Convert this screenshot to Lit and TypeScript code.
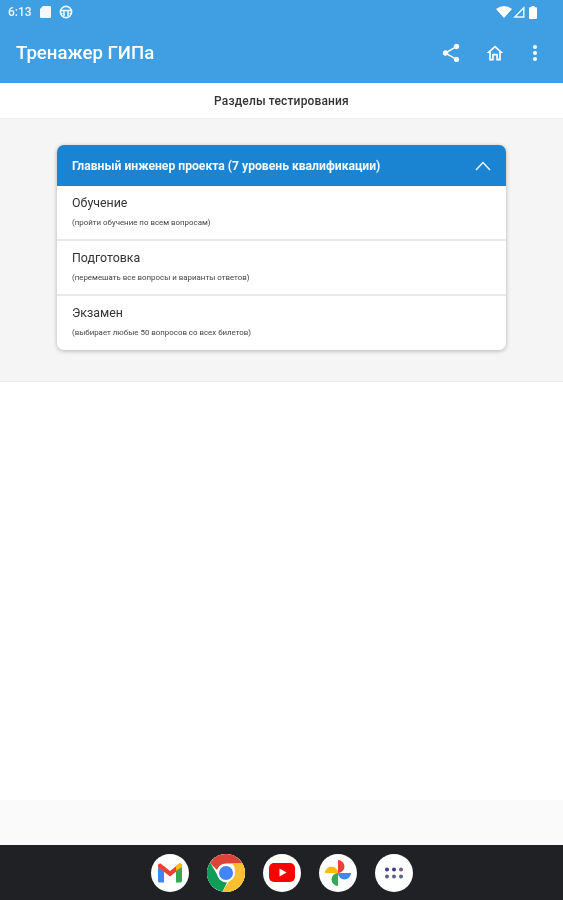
import { LitElement, html, css } from "lit";
import { customElement } from "lit/decorators.js";

@customElement("app-root")
export class AppRoot extends LitElement {
  static styles = css`
    :host { display: flex; flex-direction: column; width: 563px; height: 900px; overflow: hidden; background: #fff; font-family: Roboto, "Liberation Sans", sans-serif; filter: blur(0.4px); }
    .top { background: #3f9fe2; height: 83px; color: #fff; display: flex; flex-direction: column; flex: none; }
    .status { height: 24px; display: flex; align-items: center; padding: 0 26px 0 8px; font-size: 12px; font-weight: 500; color: #eef7fd; }
    .status .time { margin-right: 8px; }
    .status svg { display: block; }
    .status .globe { margin-left: 8px; }
    .status .signal { margin-left: 1px; }
    .status .battery { margin-left: 4px; }
    .spacer { flex: 1; }
    .appbar { flex: 1; display: flex; align-items: center; padding: 0 0 0 16px; }
    .title { font-size: 18.6px; font-weight: 500; flex: 1; padding-bottom: 1px; }
    .actions { display: flex; align-items: center; padding-right: 25px; padding-bottom: 1px; }
    .actions svg { display: block; }
    .actions .home { margin-left: 23px; }
    .actions .dots { margin-left: 27px; }
    .sub { height: 36px; flex: none; display: flex; align-items: center; justify-content: center; font-size: 12px; font-weight: 500; color: #333; box-sizing: border-box; border-bottom: 1px solid #efefef; padding-top: 1px; letter-spacing: 0.15px; }
    .section { height: 263px; flex: none; background: #f5f5f5; box-sizing: border-box; border-bottom: 1px solid #ececec; padding: 26px 57px 0; }
    .card { border-radius: 7px; box-shadow: 0 1px 4px rgba(0,0,0,.28); background: #e9e9e9; overflow: hidden; }
    .head { height: 41px; background: #1b84d2; color: #f2f8fd; display: flex; align-items: center; justify-content: space-between; padding: 0 15px 0 15px; font-size: 12.15px; font-weight: 700; }
    .row { background: #fff; height: 52.5px; margin-bottom: 2.5px; padding: 9px 15px 0; box-sizing: border-box; color: #333; }
    .row:last-child { margin-bottom: 0; height: 54px; }
    .row .name { font-size: 12.4px; line-height: 15px; }
    .row .desc { font-size: 7.9px; line-height: 9px; margin-top: 8px; color: #444; }
    .blank { flex: 1; }
    .foot { height: 45px; flex: none; background: #fafafa; }
    .dock { height: 55px; flex: none; background: #202124; display: flex; align-items: center; justify-content: center; gap: 18px; }
    .ic { width: 38px; height: 38px; border-radius: 50%; background: #fff; display: flex; align-items: center; justify-content: center; }
    .ic svg { display: block; }
  `;

  render() {
    return html`
      <div class="top">
        <div class="status">
          <span class="time">6:13</span>
          <svg width="11" height="14" viewBox="0 0 11 14"><path fill="#f2f9fe" d="M3 1h7a1 1 0 0 1 1 1v10a1 1 0 0 1-1 1H1a1 1 0 0 1-1-1V4z"/></svg>
          <svg class="globe" width="14" height="14" viewBox="0 0 14 14" fill="none" stroke="#f2f9fe" stroke-width="1.6"><circle cx="7" cy="7" r="5.6"/><path d="M1.500 5.500h11M1.500 8.500h2M10.500 8.500h2M5 6v5M9 6v5"/></svg>
          <span class="spacer"></span>
          <svg width="16" height="12" viewBox="0 0 16 12"><path fill="#fff" d="M0 3Q8-3 16 3L8 12z"/></svg>
          <svg class="signal" width="12" height="12" viewBox="0 0 12 12" fill="none" stroke="#f2f9fe" stroke-width="1.4"><path d="M10.800 1.800V11H1.800z"/></svg>
          <svg class="battery" width="8" height="13" viewBox="0 0 8 13"><path fill="#fff" d="M2.500 0h3v1.200H7a1 1 0 0 1 1 1V12a1 1 0 0 1-1 1H1a1 1 0 0 1-1-1V2.200a1 1 0 0 1 1-1h1.500z"/></svg>
        </div>
        <div class="appbar">
          <div class="title">Тренажер ГИПа</div>
          <div class="actions">
            <svg width="22" height="22" viewBox="0 0 24 24" fill="#fff"><path d="M18 16.080c-.76 0-1.440.3-1.960.77L8.910 12.700c.05-.23.090-.46.090-.7s-.04-.47-.09-.7l7.050-4.110c.54.5 1.250.81 2.040.81 1.660 0 3-1.340 3-3s-1.340-3-3-3-3 1.340-3 3c0 .24.040.47.090.7L8.040 9.810C7.500 9.310 6.790 9 6 9c-1.660 0-3 1.340-3 3s1.340 3 3 3c.79 0 1.500-.31 2.040-.81l7.120 4.160c-.05.21-.08.43-.08.65 0 1.610 1.310 2.920 2.920 2.920s2.920-1.310 2.920-2.920-1.310-2.920-2.920-2.920z"/></svg>
            <svg class="home" width="20" height="20" viewBox="0 0 24 24" fill="#fff"><path d="M12 3 2 12h3v9h5.500v-6h3v6H19v-9h3zm5 16h-1.500v-6h-7v6H7v-8.800l5-4.500 5 4.500z"/></svg>
            <svg class="dots" width="6" height="18" viewBox="0 0 6 18" fill="#fff"><circle cx="3" cy="3" r="2"/><circle cx="3" cy="9" r="2"/><circle cx="3" cy="15" r="2"/></svg>
          </div>
        </div>
      </div>
      <div class="sub">Разделы тестирования</div>
      <div class="section">
        <div class="card">
          <div class="head">
            <span>Главный инженер проекта (7 уровень квалификации)</span>
            <svg width="16" height="10" viewBox="0 0 16 10" fill="none" stroke="#e8f3fb" stroke-width="1.5"><path d="M1 9l7-7.500L15 9"/></svg>
          </div>
          <div class="row"><div class="name">Обучение</div><div class="desc">(пройти обучение по всем вопросам)</div></div>
          <div class="row"><div class="name">Подготовка</div><div class="desc">(перемешать все вопросы и варианты ответов)</div></div>
          <div class="row"><div class="name">Экзамен</div><div class="desc">(выбирает любые 50 вопросов со всех билетов)</div></div>
        </div>
      </div>
      <div class="blank"></div>
      <div class="foot"></div>
      <div class="dock">
        <div class="ic">
          <svg width="26" height="20" viewBox="0 0 26 20"><path fill="#4285f4" d="M1 4v14a1.500 1.500 0 0 0 1.500 1.500H7V8z"/><path fill="#34a853" d="M19 8v11.500h4.500A1.500 1.500 0 0 0 25 18V4z"/><path fill="#ea4335" d="M1 2.500C1 .8 3 0 4.200 1L13 8l8.800-7C23 0 25 .8 25 2.500V4l-12 9.500L1 4z"/><path fill="#fbbc04" d="M19 3.200 21.800 1C23 0 25 .8 25 2.500V4l-6 4z"/></svg>
        </div>
        <div class="ic">
          <svg width="38" height="38" viewBox="0 0 38 38"><circle cx="19" cy="19" r="19" fill="#fff"/><path fill="#db4437" d="M19 0a19 19 0 0 1 16.500 9.500H19a9.500 9.500 0 0 0-9 6.500L3 9a19 19 0 0 1 16-9z"/><path fill="#0f9d58" d="M3 8.500 11 22a9.500 9.500 0 0 0 9 6.400L15.500 37.700A19 19 0 0 1 3 8.500z"/><path fill="#fbc02d" d="M35.500 9.500A19 19 0 0 1 15.500 37.700L24 24a9.500 9.500 0 0 0 1-14.500z"/><circle cx="19" cy="19" r="9" fill="#fff"/><circle cx="19" cy="19" r="7" fill="#4285f4"/></svg>
        </div>
        <div class="ic">
          <svg width="26" height="19" viewBox="0 0 26 19"><rect width="26" height="19" rx="5" fill="#f00"/><path fill="#fff" d="M10.500 5.500v8l7-4z"/></svg>
        </div>
        <div class="ic">
          <svg width="30" height="30" viewBox="0 0 30 30"><path fill="#ea4335" d="M15 15V2a6.500 6.500 0 0 1 0 13z"/><path fill="#4285f4" d="M15 15h13a6.500 6.500 0 0 1-13 0z"/><path fill="#34a853" d="M15 15v13a6.500 6.500 0 0 1 0-13z"/><path fill="#fbbc04" d="M15 15H2a6.500 6.500 0 0 1 13 0z"/></svg>
        </div>
        <div class="ic">
          <svg width="18" height="12" viewBox="0 0 18 12"><circle cx="2" cy="2.500" r="2" fill="#3c3a8f"/><circle cx="9" cy="2.500" r="2" fill="#3c3a8f"/><circle cx="16" cy="2.500" r="2" fill="#7a5a8a"/><circle cx="2" cy="9.500" r="2" fill="#5f6080"/><circle cx="9" cy="9.500" r="2" fill="#5f6080"/><circle cx="16" cy="9.500" r="2" fill="#5f6080"/></svg>
        </div>
      </div>
    `;
  }
}
